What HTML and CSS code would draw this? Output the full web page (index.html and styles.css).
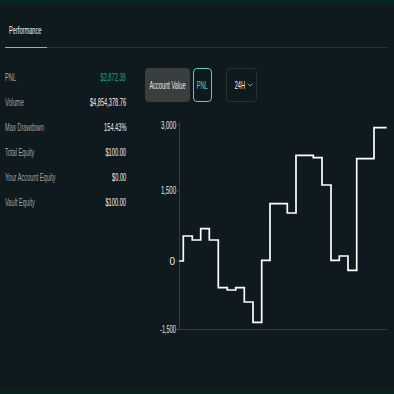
FILE: index.html
```html
<!DOCTYPE html>
<html>
<head>
<meta charset="utf-8">
<link rel="stylesheet" href="styles.css">
</head>
<body>
<div class="page">
  <div class="tabs">
    <div class="tab active"><span class="sq">Performance</span></div>
  </div>
  <div class="main">
    <div class="stats">
      <div class="row"><span class="sq label">PNL</span><span class="sq val green">$2,872.38</span></div>
      <div class="row"><span class="sq label">Volume</span><span class="sq val">$4,854,378.76</span></div>
      <div class="row"><span class="sq label">Max Drawdown</span><span class="sq val">154.43%</span></div>
      <div class="row"><span class="sq label">Total Equity</span><span class="sq val">$100.00</span></div>
      <div class="row"><span class="sq label">Your Account Equity</span><span class="sq val">$0.00</span></div>
      <div class="row"><span class="sq label">Vault Equity</span><span class="sq val">$100.00</span></div>
    </div>
    <div class="panel">
      <div class="controls">
        <div class="btn btn-account"><span class="sq c">Account Value</span></div>
        <div class="btn btn-pnl"><span class="sq c">PNL</span></div>
        <div class="btn btn-range"><span class="sq c">24H</span>
          <svg class="chev" width="6" height="4" viewBox="0 0 6 4"><path d="M0.5 0.5 L3 3 L5.5 0.5" fill="none" stroke="#8a9296" stroke-width="1"/></svg>
        </div>
      </div>
      <svg class="chart" width="249" height="230" viewBox="0 0 249 230">
        <g stroke="#363c40" stroke-width="1" fill="none">
          <path d="M34.5 11 V218.5 H242"/>
          <path d="M31 14 H34.5 M31 80 H34.5 M31 150 H34.5 M31 218.5 H34.5"/>
        </g>
        <g class="ylab" fill="#e6e6e6" font-size="10" text-anchor="end">
          <text x="31" y="17.5" textLength="15" lengthAdjust="spacingAndGlyphs">3,000</text>
          <text x="31" y="83" textLength="15" lengthAdjust="spacingAndGlyphs">1,500</text>
          <text x="30" y="153.5">0</text>
          <text x="31" y="222" textLength="16" lengthAdjust="spacingAndGlyphs">-1,500</text>
        </g>
        <path d="M34.3 150 H38.3 V125 H47.3 V129 H55.7 V117.7 H64.3 V129 H73.3 V176.7 H82.3 V179 H90.7 V176.7 H99.3 V191 H108 V211.3 H116.7 V149.3 H125 V92.7 H142.3 V102 H151 V44.3 H168.3 V46.7 H177 V74 H186 V149.3 H194.3 V145 H203 V159.3 H211.7 V47.7 H229 V16.7 H241.7" fill="none" stroke="#ffffff" stroke-width="1.7"/>
      </svg>
    </div>
  </div>
</div>
</body>
</html>
```

FILE: styles.css
```css
* { box-sizing: border-box; }
html, body { margin: 0; padding: 0; }
body {
  width: 394px;
  height: 394px;
  background: #0f1a1f;
  font-family: "Liberation Sans", Arial, sans-serif;
  font-size: 10.5px;
  color: #f0f2f2;
  overflow: hidden;
}
.page {
  height: 394px;
  border-top: 4px solid #04261f;
  border-bottom: 5px solid #04261f;
  display: flex;
  flex-direction: column;
}
.sq {
  display: inline-block;
  transform: scaleX(0.54);
  transform-origin: left center;
  white-space: nowrap;
}
.sq.c { transform-origin: center center; }
.tabs {
  margin: 0 6px 0 5px;
  border-bottom: 1px solid #272e33;
  display: flex;
}
.tab {
  width: 42px;
  padding: 20px 0 11px 4px;
  line-height: 12px;
  margin-bottom: -1px;
  color: #f0f2f2;
}
.tab.active { border-bottom: 1px solid #50d2c1; }
.main {
  display: flex;
  align-items: flex-start;
  padding-top: 14px;
}
.stats {
  width: 126px;
  padding-left: 5px;
  margin-top: 2px;
  display: flex;
  flex-direction: column;
}
.row {
  height: 25px;
  display: flex;
  align-items: center;
  justify-content: space-between;
  line-height: 12px;
}
.label { color: #9ea5a8; }
.val { transform-origin: right center; color: #f2f4f4; }
.val.green { color: #1fa67d; }
.panel {
  margin-left: 19px;
  padding-top: 6px;
  display: flex;
  flex-direction: column;
}
.controls {
  display: flex;
  align-items: center;
  height: 34px;
}
.btn {
  height: 34px;
  border-radius: 4px;
  display: flex;
  align-items: center;
  justify-content: center;
  line-height: 12px;
}
.btn-account {
  width: 45px;
  background: #3a3e3c;
  color: #e8eaea;
}
.btn-pnl {
  width: 19px;
  margin-left: 3px;
  border: 1px solid #4fd1c0;
  color: #4fd1c0;
}
.btn-range {
  width: 31px;
  margin-left: 14px;
  border: 1px solid #283035;
  color: #f0f2f2;
}
.btn-range .sq { width: 16px; text-align: center; }
.chart {
  display: block;
  margin-top: 9px;
}
.ylab { font-family: "Liberation Sans", Arial, sans-serif; }
```
